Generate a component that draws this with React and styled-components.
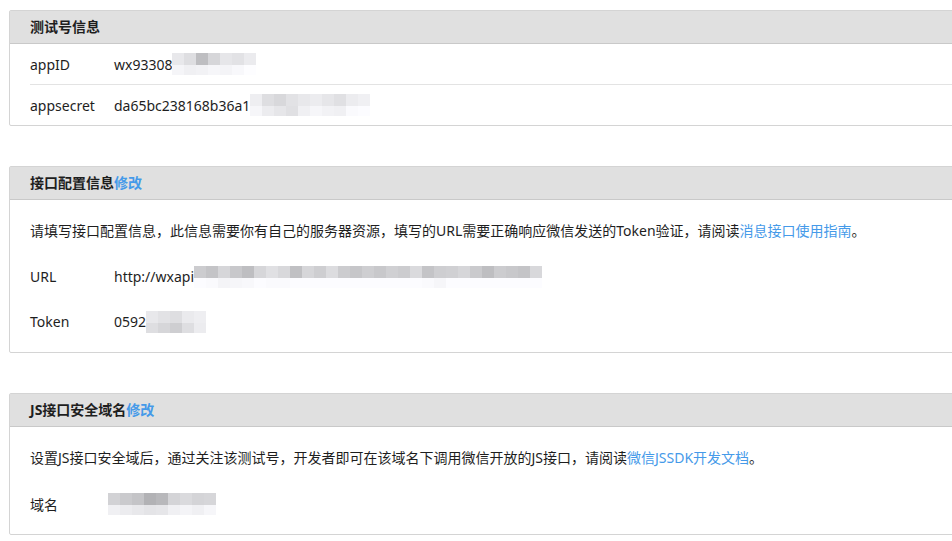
import styled, { createGlobalStyle } from "styled-components";

const Global = createGlobalStyle`
  html, body {
    margin: 0;
    padding: 0;
    background: #fff;
    overflow: hidden;
  }
  body {
    font-family: "Noto Sans", "Noto Sans CJK SC", sans-serif;
    font-size: 14px;
    color: #1e1e1e;
  }
`;

const Page = styled.div`
  padding: 10px 0 0 9px;
  width: 980px;
`;

const Panel = styled.div`
  border: 1px solid #d4d4d4;
  border-radius: 2px;
  margin-bottom: 40px;
  background: #fff;
  &:last-child {
    margin-bottom: 0;
  }
`;

const PanelHead = styled.div`
  height: 32px;
  line-height: 32px;
  padding-left: 20px;
  background: #e0e0e0;
  border-bottom: 1px solid #c9c9c9;
  font-weight: bold;
  font-size: 14px;
  color: #1e1e1e;
`;

const Link = styled.a`
  color: #459ae9;
  text-decoration: none;
  font-weight: ${(p) => (p.$bold ? "bold" : "normal")};
`;

const Body = styled.div`
  padding: ${(p) => (p.$desc ? "20px 20px 8px" : "0 20px")};
`;

const Desc = styled.p`
  margin: 0 0 12px;
  line-height: 22px;
`;

const Row = styled.div`
  display: flex;
  align-items: center;
  height: ${(p) => (p.$tall ? "45px" : "40px")};
  border-top: ${(p) => (p.$divider ? "1px solid #e3e3e3" : "none")};
`;

const Label = styled.span`
  width: 84px;
  flex-shrink: 0;
`;

const Value = styled.span`
  display: flex;
  align-items: center;
`;

const Mosaic = styled.span`
  display: inline-grid;
  grid-auto-flow: column;
  grid-template-rows: 12px 10px;
  filter: blur(0.6px);
  margin-left: ${(p) => p.$shift || 0}px;
`;

const Cell = styled.span`
  width: 12px;
`;

const Mask = ({ top, bottom, shift }) => (
  <Mosaic $shift={shift}>
    {top.map((c, i) => [
      <Cell key={"t" + i} style={{ background: c }} />,
      <Cell key={"b" + i} style={{ background: bottom[i] || "#fff" }} />,
    ])}
  </Mosaic>
);

const g = (arr) => arr.map((v) => `rgb(${v},${v},${v + 3})`);

export default function App() {
  return (
    <Page>
      <Global />
      <Panel>
        <PanelHead>测试号信息</PanelHead>
        <Body>
          <Row>
            <Label>appID</Label>
            <Value>
              wx93308
              <Mask
                top={g([232, 222, 190, 214, 230, 226, 235])}
                bottom={g([245, 240, 242, 246, 244, 248, 253])}
              />
            </Value>
          </Row>
          <Row $divider>
            <Label>appsecret</Label>
            <Value>
              da65bc238168b36a1
              <Mask
                top={g([238, 222, 216, 226, 232, 236, 230, 224, 236, 240])}
                bottom={g([246, 236, 230, 224, 240, 246, 242, 240, 250, 252])}
              />
            </Value>
          </Row>
        </Body>
      </Panel>

      <Panel>
        <PanelHead>
          接口配置信息<Link $bold>修改</Link>
        </PanelHead>
        <Body $desc>
          <Desc>
            请填写接口配置信息，此信息需要你有自己的服务器资源，填写的URL需要正确响应微信发送的Token验证，请阅读
            <Link>消息接口使用指南</Link>。
          </Desc>
          <Row $tall>
            <Label>URL</Label>
            <Value>
              http://wxapi
              <Mask
                top={g([204, 196, 214, 200, 190, 214, 224, 216, 192, 214, 206, 220, 204, 198, 206, 200, 208, 204, 218, 196, 206, 208, 214, 202, 190, 204, 200, 196, 216])}
                bottom={g([252, 250, 244, 246, 248, 252, 250, 250, 252, 252, 252, 252, 252, 252, 252, 252, 252, 252, 252, 250, 246, 252, 252, 252, 252, 252, 252, 252, 252])}
              />
            </Value>
          </Row>
          <Row $tall>
            <Label>Token</Label>
            <Value>
              0592
              <Mask
                top={g([232, 226, 222, 234, 238])}
                bottom={g([222, 214, 206, 222, 236])}
              />
            </Value>
          </Row>
        </Body>
      </Panel>

      <Panel>
        <PanelHead>
          JS接口安全域名<Link $bold>修改</Link>
        </PanelHead>
        <Body $desc>
          <Desc>
            设置JS接口安全域后，通过关注该测试号，开发者即可在该域名下调用微信开放的JS接口，请阅读
            <Link>微信JSSDK开发文档</Link>。
          </Desc>
          <Row $tall>
            <Label>域名</Label>
            <Value>
              <Mask
                shift={-6}
                top={g([210, 202, 196, 178, 184, 212, 218, 212, 214])}
                bottom={g([240, 236, 232, 228, 230, 240, 244, 240, 246])}
              />
            </Value>
          </Row>
        </Body>
      </Panel>
    </Page>
  );
}
